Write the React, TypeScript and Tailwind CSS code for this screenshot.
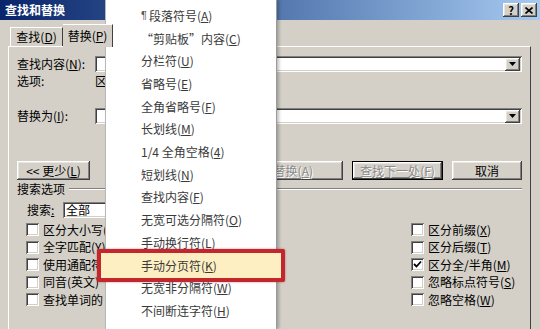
import React from "react";

const FONT = { fontFamily: '"Noto Sans CJK SC", "Noto Sans", sans-serif' };

const bevel =
  "shadow-[inset_-1px_-1px_#404040,inset_1px_1px_#ffffff,inset_-2px_-2px_#808080,inset_2px_2px_#e8e6e0]";
const sunken =
  "shadow-[inset_1px_1px_#808080,inset_-1px_-1px_#ffffff,inset_2px_2px_#404040,inset_-2px_-2px_#d4d0c8]";

function M({ label, k }: { label: string; k: string }) {
  return (
    <span className="whitespace-nowrap">
      {label}(<span className="underline">{k}</span>)
    </span>
  );
}

function DropBtn() {
  return (
    <div className={`w-[15px] h-[13px] bg-[#d4d0c8] ${bevel} flex items-center justify-center`}>
      <svg width="7" height="4" viewBox="0 0 7 4">
        <path d="M0 0h7L3.5 4z" fill="#000" />
      </svg>
    </div>
  );
}

function Check({ checked }: { checked?: boolean }) {
  return (
    <div className={`w-[13px] h-[13px] bg-white ${sunken} flex items-center justify-center shrink-0`}>
      {checked && (
        <svg width="9" height="9" viewBox="0 0 9 9">
          <path d="M1 4l2.5 2.5L8 1.5" stroke="#000" strokeWidth="1.8" fill="none" />
        </svg>
      )}
    </div>
  );
}

function CB({ text, k, checked, clip }: { text: string; k?: string; checked?: boolean; clip?: boolean }) {
  return (
    <div className={`h-[17.5px] flex items-center gap-[4px] ${clip ? "w-[80px] overflow-hidden" : ""}`}>
      <Check checked={checked} />
      <span className="text-[12px] leading-none whitespace-nowrap text-black">
        {text}
        {k && (
          <>
            (<span className="underline">{k}</span>)
          </>
        )}
      </span>
    </div>
  );
}

function Btn({
  w,
  children,
  disabled,
  def,
  extra,
}: {
  w: string;
  children?: React.ReactNode;
  disabled?: boolean;
  def?: boolean;
  extra?: string;
}) {
  return (
    <div
      className={`${w} h-[19px] bg-[#d4d0c8] ${def ? "border border-black" : ""} ${bevel} flex items-center ${
        extra ?? "justify-center"
      } text-[12px] leading-none ${
        disabled ? "text-[#8a8a8a] [text-shadow:1px_1px_0_#ffffff]" : "text-black"
      }`}
    >
      {children}
    </div>
  );
}

const menuItems: { label: string; k: string; para?: boolean }[] = [
  { label: "段落符号", k: "A", para: true },
  { label: "“剪贴板”内容", k: "C" },
  { label: "分栏符", k: "U" },
  { label: "省略号", k: "E" },
  { label: "全角省略号", k: "F" },
  { label: "长划线", k: "M" },
  { label: "1/4 全角空格", k: "4" },
  { label: "短划线", k: "N" },
  { label: "查找内容", k: "F" },
  { label: "无宽可选分隔符", k: "O" },
  { label: "手动换行符", k: "L" },
  { label: "手动分页符", k: "K" },
  { label: "无宽非分隔符", k: "W" },
  { label: "不间断连字符", k: "H" },
];

export default function App() {
  return (
    <div className="relative w-[540px] h-[329px] overflow-hidden bg-[#d4d0c8] text-black" style={FONT}>
      {/* title bar */}
      <div className="h-[20px] flex items-center justify-between bg-gradient-to-r from-[#0a246a] to-[#a6caf0] pl-[5px] pr-[3px]">
        <span className="text-white font-bold text-[12px] leading-none">查找和替换</span>
        <div className="flex gap-[2px]">
          <div className={`w-[16px] h-[14px] bg-[#d4d0c8] ${bevel} flex items-center justify-center text-[11px] font-bold leading-none`}>
            ?
          </div>
          <div className={`w-[16px] h-[14px] bg-[#d4d0c8] ${bevel} flex items-center justify-center`}>
            <svg width="8" height="7" viewBox="0 0 8 7">
              <path d="M0.5 0.5l7 6M7.5 0.5l-7 6" stroke="#000" strokeWidth="1.6" />
            </svg>
          </div>
        </div>
      </div>

      {/* tabs */}
      <div className="ml-[10px] h-[26px] flex items-end">
        <div className="w-[53px] h-[19px] border-t border-l border-white border-r border-r-[#404040] flex items-center justify-center text-[12px] leading-none">
          <M label="查找" k="D" />
        </div>
        <div className="w-[50px] h-[23px] border-t border-white border-r border-r-[#404040] flex items-center justify-center text-[12px] leading-none -mb-[1px] bg-[#d4d0c8] relative z-10">
          <M label="替换" k="P" />
        </div>
      </div>

      {/* panel */}
      <div className="ml-[8px] w-[523px] h-[300px] border-t border-l border-white border-r border-r-[#404040] pl-[8px] pr-[8px]">
        <div className="mt-[9px] h-[16px] flex items-center">
          <span className="w-[78px] text-[12px] leading-none">
            <M label="查找内容" k="N" />:
          </span>
          <div className={`flex-1 h-[16px] bg-white ${sunken} flex items-center justify-end pr-[2px]`}>
            <DropBtn />
          </div>
        </div>
        <div className="mt-[1px] h-[15px] flex items-center text-[12px] leading-none">
          <span className="w-[78px]">选项:</span>
          <span>区</span>
        </div>
        <div className="mt-[20px] h-[16px] flex items-center">
          <span className="w-[78px] text-[12px] leading-none">
            <M label="替换为" k="I" />:
          </span>
          <div className={`flex-1 h-[16px] bg-white ${sunken} flex items-center justify-end pr-[2px]`}>
            <DropBtn />
          </div>
        </div>

        <div className="mt-[37px] flex items-center">
          <Btn w="w-[73px]">
            <span>
              &lt;&lt; 更少(<span className="underline">L</span>)
            </span>
          </Btn>
          <div className="ml-auto flex gap-[9px]">
            <Btn w="w-[90px]" disabled />
            <Btn w="w-[90px]" disabled extra="justify-end pr-[30px]">
              <M label="替换" k="A" />
            </Btn>
            <Btn w="w-[91px]" disabled def>
              <M label="查找下一处" k="F" />
            </Btn>
            <Btn w="w-[70px]">
              <span>取消</span>
            </Btn>
          </div>
        </div>

        <div className="mt-[3px] h-[12px] flex items-center gap-[4px]">
          <span className="text-[12px] leading-none">搜索选项</span>
          <div className="flex-1 h-[2px] border-t border-[#808080] border-b border-b-white" />
        </div>

        <div className="mt-[7px] h-[16px] flex items-center pl-[10px]">
          <span className="w-[36px] text-[12px] leading-none">
            搜索<span className="underline">:</span>
          </span>
          <div className={`w-[130px] h-[16px] bg-white ${sunken} flex items-center pl-[3px] text-[12px] leading-none`}>
            全部
          </div>
        </div>

        <div className="mt-[3px] flex pl-[9px]">
          <div className="w-[385px] flex flex-col">
            <CB text="区分大小写(" clip />
            <CB text="全字匹配(Y)" clip />
            <CB text="使用通配符" clip />
            <CB text="同音(英文)" clip />
            <CB text="查找单词的" clip />
          </div>
          <div className="flex flex-col">
            <CB text="区分前缀" k="X" />
            <CB text="区分后缀" k="T" />
            <CB text="区分全/半角" k="M" checked />
            <CB text="忽略标点符号" k="S" />
            <CB text="忽略空格" k="W" />
          </div>
        </div>
      </div>

      {/* popup menu */}
      <div className="absolute left-[105px] top-0 w-[172px] h-[329px] bg-white border-l border-[#b8b8b8] border-r border-r-[#9a9a9a] shadow-[2px_0_3px_rgba(0,0,0,0.25)] pt-[4.6px]">
        {menuItems.map((it, i) => (
          <div key={i} className="relative h-[22.7px] flex items-center pl-[35px]">
            {i === 11 && (
              <div className="absolute left-[-9px] top-[-4.8px] w-[188px] h-[33px] border-[4px] border-[#c3262c] bg-[#fdefc2] rounded-[2px] shadow-[0_0_2px_rgba(150,20,20,0.6)]" />
            )}
            {it.para && (
              <span
                className="relative text-[11px] leading-none text-[#555] mr-[2px]"
                style={{ fontFamily: '"Liberation Sans", sans-serif' }}
              >
                ¶
              </span>
            )}
            <span className="relative text-[12px] leading-none text-[#3a3a3a]">
              <M label={it.label} k={it.k} />
            </span>
          </div>
        ))}
      </div>
    </div>
  );
}
